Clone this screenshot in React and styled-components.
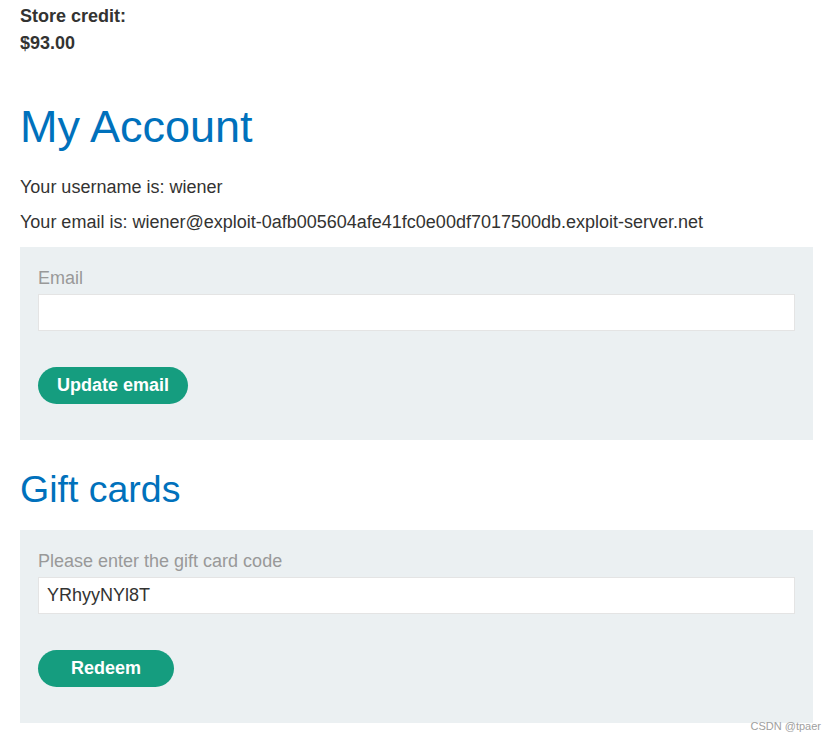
import React, { useState } from 'react';
import styled, { createGlobalStyle } from 'styled-components';

const GlobalStyle = createGlobalStyle`
  html, body {
    margin: 0;
    padding: 0;
    background: #fff;
  }
  body {
    font-family: "Liberation Sans", Arial, sans-serif;
    color: #333332;
    font-size: 18px;
  }
`;

const Page = styled.div`
  position: relative;
  padding: 3px 23px 17px 20px;
  min-height: 739px;
  box-sizing: border-box;
`;
const Credit = styled.p`
  margin: 0;
  font-weight: bold;
  font-size: 18px;
  line-height: 27px;
`;
const Title = styled.h1`
  margin: 43px 0 0;
  font-weight: normal;
  font-size: 45px;
  line-height: 54px;
  color: #0071bc;
`;
const Info = styled.p`
  margin: ${({ $first }) => ($first ? '20px' : '8px')} 0 0;
  font-size: 18px;
  line-height: 27px;
`;
const Heading = styled.h2`
  margin: 27px 0 0;
  font-weight: normal;
  font-size: 37.5px;
  line-height: 45px;
  color: #0071bc;
`;
const Panel = styled.form`
  margin-top: ${({ $top }) => $top}px;
  background: #ebf0f2;
  padding: 18px 18px 36px;
  display: flex;
  flex-direction: column;
  align-items: flex-start;
`;
const Label = styled.label`
  font-size: 18px;
  line-height: 27px;
  color: #999;
  margin-bottom: 2px;
`;
const Input = styled.input`
  width: 100%;
  height: 37px;
  box-sizing: border-box;
  border: 1px solid #e4e4e4;
  background: #fff;
  padding: 0 8px;
  font-family: "Liberation Sans", Arial, sans-serif;
  font-size: 18px;
  color: #333332;
  outline: none;
`;
const Button = styled.button`
  margin-top: 36px;
  height: 37px;
  min-width: 136px;
  box-sizing: border-box;
  padding: 0 19px;
  border: none;
  border-radius: 19px;
  background: #159d7f;
  color: #fff;
  font-family: "Liberation Sans", Arial, sans-serif;
  font-weight: bold;
  font-size: 18px;
  cursor: pointer;
`;
const Watermark = styled.span`
  position: absolute;
  right: 15px;
  bottom: 8px;
  font-family: "Liberation Sans", Arial, sans-serif;
  font-size: 11px;
  color: #a0a0a0;
`;

const App = () => {
  const [email, setEmail] = useState('');
  const [code, setCode] = useState('YRhyyNYl8T');

  return (
    <Page>
      <GlobalStyle />
      <Credit>Store credit:</Credit>
      <Credit>$93.00</Credit>

      <Title>My Account</Title>
      <Info $first>Your username is: wiener</Info>
      <Info>Your email is: wiener@exploit-0afb005604afe41fc0e00df7017500db.exploit-server.net</Info>

      <Panel $top={11} onSubmit={(e) => e.preventDefault()}>
        <Label>Email</Label>
        <Input value={email} onChange={(e) => setEmail(e.target.value)} />
        <Button type="submit">Update email</Button>
      </Panel>

      <Heading>Gift cards</Heading>
      <Panel $top={18} onSubmit={(e) => e.preventDefault()}>
        <Label>Please enter the gift card code</Label>
        <Input value={code} onChange={(e) => setCode(e.target.value)} />
        <Button type="submit">Redeem</Button>
      </Panel>

      <Watermark>CSDN @tpaer</Watermark>
    </Page>
  );
};

export default App;
